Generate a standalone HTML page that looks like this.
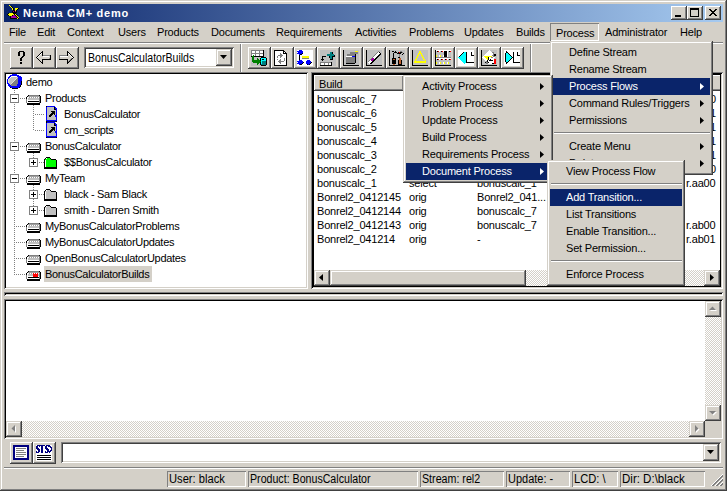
<!DOCTYPE html><html><head><meta charset="utf-8"><style>
*{margin:0;padding:0;box-sizing:border-box}
html,body{width:727px;height:491px;overflow:hidden;background:#D4D0C8}
body{position:relative;font-family:"Liberation Sans",sans-serif;font-size:11px;color:#000}
div,svg{position:absolute}
.t{white-space:nowrap;line-height:13px;font-size:11px;letter-spacing:-0.2px}
.tt{white-space:nowrap;line-height:13px;font-size:11px;letter-spacing:-0.3px}
.btn{background:#D4D0C8;box-shadow:inset -1px -1px #404040,inset 1px 1px #FFFFFF,inset -2px -2px #808080}
.sbtn{background:#D4D0C8;box-shadow:inset -1px -1px #404040,inset 1px 1px #D4D0C8,inset -2px -2px #808080,inset 2px 2px #FFFFFF}
.sunk{box-shadow:inset 1px 1px #808080,inset -1px -1px #FFFFFF,inset 2px 2px #404040,inset -2px -2px #D4D0C8}
.sunkp{box-shadow:inset 1px 1px #808080,inset -1px -1px #FFFFFF,inset 2px 2px #000000,inset -2px -2px #D4D0C8}
.menu{background:#D4D0C8;box-shadow:inset -1px -1px #404040,inset 1px 1px #D4D0C8,inset -2px -2px #808080,inset 2px 2px #FFFFFF}
.chk{background-color:#FFFFFF;background-image:linear-gradient(45deg,#D4D0C8 25%,transparent 25%,transparent 75%,#D4D0C8 75%),linear-gradient(45deg,#D4D0C8 25%,transparent 25%,transparent 75%,#D4D0C8 75%);background-size:2px 2px;background-position:0 0,1px 1px}
.sb{background:#D4D0C8;box-shadow:inset 1px 1px #808080,inset -1px -1px #FFFFFF}
.hl{background:#0A246A}
.ms{white-space:nowrap;line-height:13px;font-size:12px;transform:scaleX(0.88);transform-origin:0 0}
</style></head><body>

<div style="left:0;top:0;width:727px;height:491px;box-shadow:inset -1px -1px #404040,inset 1px 1px #D4D0C8,inset -2px -2px #808080,inset 2px 2px #FFFFFF"></div>
<div style="left:4px;top:4px;width:719px;height:18px;background:linear-gradient(to right,#0A246A,#A6CAF0)"></div>
<svg style="left:6px;top:4px;" width="14" height="16" viewBox="0 0 14 16" shape-rendering="crispEdges"><path d="M3 1h1v1h-1zM4 2h1v1h-1zM5 3h1v1h-1zM6 4h1v1h-1zM9 4h3v1h-3zM6 5h1v1h-1zM9 5h2v1h-2zM9 6h1v1h-1zM3 9h4v1h-4zM2 10h6v1h-6zM9 10h1v1h-1zM3 11h3v1h-3zM10 11h1v1h-1zM11 12h1v1h-1zM12 13h1v1h-1zM11 14h1v1h-1z" fill="#FFFF00"/><path d="M5 2h1v1h-1zM6 3h1v1h-1zM7 4h1v1h-1zM12 4h1v1h-1zM7 5h1v1h-1zM11 5h1v1h-1zM7 6h2v1h-2zM10 6h1v1h-1zM6 7h1v1h-1zM8 7h1v1h-1zM10 7h1v1h-1zM6 8h5v1h-5zM2 9h1v1h-1zM7 9h3v1h-3zM1 10h1v1h-1zM8 10h1v1h-1zM10 10h1v1h-1zM2 11h1v1h-1zM6 11h1v1h-1zM9 11h1v1h-1zM11 11h1v1h-1zM4 12h1v1h-1zM10 12h1v1h-1zM4 13h1v1h-1zM11 13h1v1h-1zM4 14h7v1h-7zM12 14h1v1h-1z" fill="#000000"/><path d="M7 7h1v1h-1zM9 7h1v1h-1zM7 11h2v1h-2zM5 12h5v1h-5zM5 13h6v1h-6z" fill="#A000A0"/></svg>
<div style="left:23px;top:7px;line-height:13px;font-size:11px;font-weight:bold;color:#fff;letter-spacing:0.73px;white-space:nowrap">Neuma CM+ demo</div>
<div class="btn" style="left:671px;top:6px;width:16px;height:14px;"></div>
<div class="btn" style="left:687px;top:6px;width:16px;height:14px;"></div>
<div class="btn" style="left:705px;top:6px;width:16px;height:14px;"></div>
<div style="left:675px;top:15px;width:6px;height:2px;background:#000"></div>
<div style="left:690px;top:8px;width:9px;height:9px;border:1px solid #000;border-top-width:2px"></div>
<svg style="left:709px;top:9px" width="8" height="7" viewBox="0 0 8 7" shape-rendering="crispEdges"><path d="M0 0h2v1h-2zM6 0h2v1h-2zM1 1h2v1h-2zM5 1h2v1h-2zM2 2h4v1h-4zM3 3h2v1h-2zM2 4h4v1h-4zM1 5h2v1h-2zM5 5h2v1h-2zM0 6h2v1h-2zM6 6h2v1h-2z" fill="#000"/></svg>
<div class="t" style="left:9px;top:26px;">File</div>
<div class="t" style="left:37px;top:26px;">Edit</div>
<div class="t" style="left:67px;top:26px;">Context</div>
<div class="t" style="left:118px;top:26px;">Users</div>
<div class="t" style="left:157px;top:26px;">Products</div>
<div class="t" style="left:211px;top:26px;">Documents</div>
<div class="t" style="left:276px;top:26px;">Requirements</div>
<div class="t" style="left:355px;top:26px;">Activities</div>
<div class="t" style="left:409px;top:26px;">Problems</div>
<div class="t" style="left:464px;top:26px;">Updates</div>
<div class="t" style="left:516px;top:26px;">Builds</div>
<div class="t" style="left:605px;top:26px;">Administrator</div>
<div class="t" style="left:680px;top:26px;">Help</div>
<div style="left:550px;top:23px;width:49px;height:18px;box-shadow:inset 1px 1px #808080,inset -1px -1px #FFFFFF"></div>
<div class="t" style="left:556px;top:27px;">Process</div>
<div style="left:4px;top:42px;width:719px;height:1px;background:#808080"></div>
<div style="left:4px;top:43px;width:719px;height:1px;background:#FFFFFF"></div>
<div class="btn" style="left:10px;top:47px;width:23px;height:22px;"></div>
<div class="btn" style="left:33px;top:47px;width:23px;height:22px;"></div>
<div class="btn" style="left:56px;top:47px;width:23px;height:22px;"></div>
<svg style="left:18px;top:51px;" width="7" height="13" viewBox="0 0 7 13" shape-rendering="crispEdges"><path d="M1 0h5v1h-5zM0 1h2v1h-2zM5 1h2v1h-2zM0 2h2v1h-2zM5 2h2v1h-2zM0 3h2v1h-2zM5 3h2v1h-2zM0 4h2v1h-2zM5 4h2v1h-2zM4 5h2v1h-2zM3 6h2v1h-2zM2 7h2v1h-2zM2 8h2v1h-2zM2 9h2v1h-2zM2 11h2v1h-2zM2 12h2v1h-2z" fill="#000000"/></svg>
<svg style="left:36px;top:51px;" width="15" height="13" viewBox="0 0 15 13" shape-rendering="crispEdges"><path d="M6 0h1v1h-1zM5 1h2v1h-2zM4 2h1v1h-1zM6 2h1v1h-1zM3 3h1v1h-1zM6 3h1v1h-1zM2 4h1v1h-1zM6 4h1v1h-1zM14 4h1v1h-1zM1 5h1v1h-1zM14 5h1v1h-1zM0 6h1v1h-1zM14 6h1v1h-1zM1 7h1v1h-1zM14 7h1v1h-1zM2 8h1v1h-1zM6 8h9v1h-9zM3 9h1v1h-1zM6 9h1v1h-1zM4 10h1v1h-1zM6 10h1v1h-1zM5 11h2v1h-2zM6 12h1v1h-1z" fill="#000000"/><path d="M5 2h1v1h-1zM4 3h1v1h-1zM3 4h1v1h-1zM2 5h1v1h-1zM7 5h6v1h-6zM1 6h1v1h-1z" fill="#FFFFFF"/><path d="M5 3h1v1h-1zM4 4h2v1h-2zM3 5h4v1h-4zM13 5h1v1h-1zM2 6h12v1h-12zM2 7h11v1h-11zM3 8h3v1h-3zM4 9h2v1h-2zM5 10h1v1h-1z" fill="#D4D0C8"/><path d="M7 4h7v1h-7zM13 7h1v1h-1z" fill="#808080"/></svg>
<svg style="left:59px;top:51px;" width="15" height="13" viewBox="0 0 15 13" shape-rendering="crispEdges"><path d="M8 0h1v1h-1zM8 1h2v1h-2zM8 2h1v1h-1zM10 2h1v1h-1zM8 3h1v1h-1zM11 3h1v1h-1zM8 4h1v1h-1zM12 4h1v1h-1zM13 5h1v1h-1zM14 6h1v1h-1zM13 7h1v1h-1zM0 8h9v1h-9zM12 8h1v1h-1zM8 9h1v1h-1zM11 9h1v1h-1zM8 10h1v1h-1zM10 10h1v1h-1zM8 11h2v1h-2zM8 12h1v1h-1z" fill="#000000"/><path d="M9 2h1v1h-1zM10 3h1v1h-1zM11 4h1v1h-1zM1 5h8v1h-8zM12 5h1v1h-1zM13 6h1v1h-1z" fill="#FFFFFF"/><path d="M9 3h1v1h-1zM9 4h2v1h-2zM9 5h3v1h-3zM1 6h12v1h-12zM1 7h11v1h-11zM9 8h2v1h-2zM9 9h1v1h-1z" fill="#D4D0C8"/><path d="M0 4h8v1h-8zM0 5h1v1h-1zM0 6h1v1h-1zM0 7h1v1h-1zM12 7h1v1h-1zM11 8h1v1h-1zM10 9h1v1h-1zM9 10h1v1h-1z" fill="#808080"/></svg>
<div class="sunk" style="left:84px;top:47px;width:150px;height:21px;background:#fff"></div>
<div class="ms" style="left:88px;top:52px">BonusCalculatorBuilds</div>
<div class="sbtn" style="left:216px;top:49px;width:16px;height:17px"></div>
<svg style="left:220px;top:55px" width="7" height="4"><path d="M0 0h7l-3.5 4z" fill="#000"/></svg>
<div style="left:240px;top:44px;width:1px;height:28px;background:#808080"></div>
<div style="left:241px;top:44px;width:1px;height:28px;background:#fff"></div>
<div style="left:530px;top:44px;width:1px;height:28px;background:#808080"></div>
<div style="left:531px;top:44px;width:1px;height:28px;background:#fff"></div>
<div class="btn" style="left:248px;top:47px;width:23px;height:22px;"></div>
<svg style="left:251px;top:50px;" width="16" height="16" viewBox="0 0 16 16" shape-rendering="crispEdges"><path d="M0 0h12v1h-12zM0 1h1v1h-1zM4 1h1v1h-1zM8 1h1v1h-1zM0 2h1v1h-1zM4 2h1v1h-1zM8 2h1v1h-1zM0 3h12v1h-12zM0 4h1v1h-1zM4 4h1v1h-1zM8 4h1v1h-1zM0 5h1v1h-1zM4 5h1v1h-1zM8 5h1v1h-1z" fill="#808080"/><path d="M12 0h1v1h-1zM12 1h1v1h-1zM12 2h1v1h-1zM12 3h1v1h-1zM12 4h1v1h-1zM12 5h1v1h-1zM0 6h1v1h-1zM3 6h10v1h-10zM10 7h5v1h-5zM9 8h1v1h-1zM15 8h1v1h-1zM9 9h1v1h-1zM11 9h2v1h-2zM15 9h1v1h-1zM9 10h1v1h-1zM15 10h1v1h-1zM15 11h1v1h-1zM9 12h1v1h-1zM15 12h1v1h-1zM9 13h1v1h-1zM15 13h1v1h-1zM9 14h1v1h-1zM15 14h1v1h-1zM10 15h5v1h-5z" fill="#000000"/><path d="M13 0h3v1h-3zM13 1h3v1h-3zM13 2h3v1h-3zM13 3h3v1h-3zM13 4h3v1h-3zM13 5h3v1h-3zM13 6h3v1h-3zM0 7h1v1h-1zM3 7h7v1h-7zM15 7h1v1h-1zM0 8h1v1h-1zM3 8h3v1h-3zM7 8h2v1h-2zM0 9h1v1h-1zM3 9h3v1h-3zM8 9h1v1h-1zM0 10h1v1h-1zM0 11h1v1h-1zM0 12h2v1h-2zM0 13h6v1h-6zM8 13h1v1h-1zM0 14h6v1h-6zM7 14h2v1h-2zM0 15h10v1h-10zM15 15h1v1h-1z" fill="#C0C0C0"/><path d="M1 1h3v1h-3zM5 1h3v1h-3zM9 1h3v1h-3zM1 2h3v1h-3zM5 2h3v1h-3zM9 2h3v1h-3zM1 4h3v1h-3zM5 4h3v1h-3zM9 4h3v1h-3zM1 5h1v1h-1zM3 5h1v1h-1zM5 5h3v1h-3zM9 5h3v1h-3z" fill="#FFFFFF"/><path d="M2 5h1v1h-1zM1 6h2v1h-2zM1 7h2v1h-2zM1 8h2v1h-2zM6 8h1v1h-1zM1 9h2v1h-2zM6 9h2v1h-2zM1 10h8v1h-8zM1 11h9v1h-9zM2 12h7v1h-7zM6 13h2v1h-2zM6 14h1v1h-1z" fill="#008000"/><path d="M10 8h5v1h-5zM10 9h1v1h-1zM13 9h2v1h-2zM10 10h5v1h-5zM10 11h1v1h-1zM10 12h1v1h-1zM10 13h1v1h-1z" fill="#00FFFF"/><path d="M11 11h4v1h-4zM11 12h4v1h-4zM11 13h4v1h-4zM10 14h5v1h-5z" fill="#008080"/></svg>
<div class="btn" style="left:271px;top:47px;width:23px;height:22px;"></div>
<svg style="left:274px;top:50px;" width="16" height="16" viewBox="0 0 16 16" shape-rendering="crispEdges"><path d="M0 0h10v1h-10zM0 1h1v1h-1zM9 1h2v1h-2zM0 2h1v1h-1zM9 2h1v1h-1zM11 2h1v1h-1zM0 3h1v1h-1zM9 3h4v1h-4zM0 4h1v1h-1zM12 4h1v1h-1zM0 5h1v1h-1zM12 5h1v1h-1zM0 6h1v1h-1zM12 6h1v1h-1zM0 7h1v1h-1zM12 7h1v1h-1zM0 8h1v1h-1zM12 8h1v1h-1zM0 9h1v1h-1zM12 9h1v1h-1zM0 10h1v1h-1zM12 10h1v1h-1zM0 11h1v1h-1zM12 11h1v1h-1zM0 12h1v1h-1zM12 12h1v1h-1zM0 13h1v1h-1zM12 13h1v1h-1zM0 14h1v1h-1zM12 14h1v1h-1zM0 15h13v1h-13z" fill="#000000"/><path d="M1 1h8v1h-8zM1 2h8v1h-8zM10 2h1v1h-1zM1 3h5v1h-5zM7 3h2v1h-2zM1 4h5v1h-5zM8 4h4v1h-4zM1 5h3v1h-3zM9 5h3v1h-3zM1 6h2v1h-2zM4 6h2v1h-2zM8 6h4v1h-4zM1 7h2v1h-2zM4 7h2v1h-2zM7 7h5v1h-5zM1 8h9v1h-9zM11 8h1v1h-1zM1 9h2v1h-2zM4 9h2v1h-2zM7 9h3v1h-3zM11 9h1v1h-1zM1 10h4v1h-4zM7 10h3v1h-3zM11 10h1v1h-1zM1 11h3v1h-3zM10 11h2v1h-2zM1 12h4v1h-4zM7 12h5v1h-5zM1 13h5v1h-5zM7 13h5v1h-5zM1 14h11v1h-11z" fill="#FFFFFF"/><path d="M6 3h1v1h-1zM6 4h2v1h-2zM4 5h5v1h-5zM3 6h1v1h-1zM6 6h2v1h-2zM3 7h1v1h-1zM6 7h1v1h-1zM10 8h1v1h-1zM3 9h1v1h-1zM6 9h1v1h-1zM10 9h1v1h-1zM5 10h2v1h-2zM10 10h1v1h-1zM4 11h6v1h-6zM5 12h2v1h-2zM6 13h1v1h-1z" fill="#808080"/></svg>
<div class="btn" style="left:294px;top:47px;width:23px;height:22px;"></div>
<svg style="left:297px;top:50px;" width="16" height="16" viewBox="0 0 16 16" shape-rendering="crispEdges"><path d="M0 0h2v1h-2zM5 0h11v1h-11zM6 1h10v1h-10zM0 2h1v1h-1zM6 2h10v1h-10zM6 3h10v1h-10zM0 4h2v1h-2zM5 4h11v1h-11zM0 5h2v1h-2zM3 5h13v1h-13zM0 6h2v1h-2zM3 6h2v1h-2zM12 6h4v1h-4zM0 7h2v1h-2zM3 7h2v1h-2zM12 7h4v1h-4zM0 8h2v1h-2zM3 8h2v1h-2zM12 8h4v1h-4zM0 9h2v1h-2zM3 9h13v1h-13zM0 10h2v1h-2zM5 10h5v1h-5zM13 10h3v1h-3zM6 11h3v1h-3zM14 11h2v1h-2zM0 12h1v1h-1zM7 12h2v1h-2zM15 12h1v1h-1zM6 13h3v1h-3zM14 13h2v1h-2zM0 14h2v1h-2zM5 14h5v1h-5zM13 14h3v1h-3zM0 15h16v1h-16z" fill="#FFFFFF"/><path d="M2 0h3v1h-3zM0 1h6v1h-6zM1 2h5v1h-5zM0 3h5v1h-5zM2 4h1v1h-1zM2 10h3v1h-3zM10 10h3v1h-3zM0 11h6v1h-6zM9 11h5v1h-5zM1 12h5v1h-5zM9 12h5v1h-5zM0 13h5v1h-5zM9 13h4v1h-4zM2 14h1v1h-1zM11 14h1v1h-1z" fill="#0000FF"/><path d="M5 3h1v1h-1zM3 4h2v1h-2zM2 5h1v1h-1zM2 6h1v1h-1zM2 7h1v1h-1zM2 8h1v1h-1zM2 9h1v1h-1zM6 12h1v1h-1zM14 12h1v1h-1zM5 13h1v1h-1zM13 13h1v1h-1zM3 14h2v1h-2zM10 14h1v1h-1zM12 14h1v1h-1z" fill="#000000"/><path d="M5 6h7v1h-7zM5 7h7v1h-7z" fill="#FFFF00"/><path d="M5 8h7v1h-7z" fill="#808080"/></svg>
<div class="btn" style="left:317px;top:47px;width:23px;height:22px;"></div>
<svg style="left:320px;top:50px;" width="16" height="16" viewBox="0 0 16 16" shape-rendering="crispEdges"><path d="M0 0h16v1h-16zM0 1h16v1h-16zM0 2h10v1h-10zM13 2h3v1h-3zM0 3h10v1h-10zM13 3h3v1h-3zM0 4h7v1h-7zM14 4h2v1h-2zM0 5h7v1h-7zM15 5h1v1h-1zM0 6h2v1h-2zM6 6h3v1h-3zM15 6h1v1h-1zM0 7h2v1h-2zM3 7h6v1h-6zM13 7h3v1h-3zM0 8h2v1h-2zM3 8h7v1h-7zM13 8h3v1h-3zM0 9h1v1h-1zM4 9h6v1h-6zM13 9h3v1h-3zM0 10h2v1h-2zM3 10h13v1h-13zM0 11h16v1h-16zM12 12h4v1h-4zM12 13h4v1h-4zM12 14h4v1h-4zM12 15h4v1h-4z" fill="#C0C0C0"/><path d="M10 2h2v1h-2zM10 3h2v1h-2zM7 4h7v1h-7zM7 5h7v1h-7zM10 6h2v1h-2zM10 7h2v1h-2zM10 8h2v1h-2z" fill="#008080"/><path d="M12 2h1v1h-1zM12 3h1v1h-1zM14 5h1v1h-1zM2 6h4v1h-4zM9 6h1v1h-1zM12 6h3v1h-3zM2 7h1v1h-1zM9 7h1v1h-1zM12 7h1v1h-1zM2 8h1v1h-1zM12 8h1v1h-1zM1 9h3v1h-3zM10 9h3v1h-3zM2 10h1v1h-1zM11 12h1v1h-1zM11 13h1v1h-1zM11 14h1v1h-1zM0 15h12v1h-12z" fill="#000000"/><path d="M0 12h11v1h-11zM0 13h1v1h-1zM4 13h1v1h-1zM8 13h1v1h-1zM0 14h1v1h-1zM4 14h1v1h-1zM8 14h1v1h-1z" fill="#808080"/><path d="M1 13h3v1h-3zM5 13h3v1h-3zM9 13h2v1h-2zM1 14h3v1h-3zM5 14h3v1h-3zM9 14h2v1h-2z" fill="#FFFFFF"/></svg>
<div class="btn" style="left:340px;top:47px;width:23px;height:22px;"></div>
<svg style="left:343px;top:50px;" width="16" height="16" viewBox="0 0 16 16" shape-rendering="crispEdges"><path d="M0 0h1v1h-1zM0 1h1v1h-1zM0 2h1v1h-1zM0 3h1v1h-1zM0 4h1v1h-1zM12 4h1v1h-1zM0 5h1v1h-1zM12 5h1v1h-1zM0 6h1v1h-1zM12 6h1v1h-1zM0 7h1v1h-1zM12 7h1v1h-1zM0 8h1v1h-1zM12 8h1v1h-1zM0 9h1v1h-1zM12 9h1v1h-1zM0 10h1v1h-1zM12 10h1v1h-1zM0 11h1v1h-1zM12 11h1v1h-1zM0 12h1v1h-1zM12 12h1v1h-1zM0 13h1v1h-1zM3 13h9v1h-9zM0 14h1v1h-1zM0 15h16v1h-16z" fill="#000000"/><path d="M1 0h15v1h-15zM1 1h11v1h-11zM15 1h1v1h-1zM1 2h6v1h-6zM15 2h1v1h-1zM1 3h6v1h-6zM15 3h1v1h-1zM1 4h3v1h-3zM13 4h3v1h-3zM1 5h3v1h-3zM13 5h3v1h-3zM1 6h2v1h-2zM13 6h3v1h-3zM1 7h2v1h-2zM13 7h3v1h-3zM1 8h2v1h-2zM13 8h3v1h-3zM1 9h2v1h-2zM13 9h3v1h-3zM1 10h2v1h-2zM13 10h3v1h-3zM1 11h2v1h-2zM13 11h3v1h-3zM1 12h2v1h-2zM13 12h3v1h-3zM1 13h2v1h-2zM12 13h4v1h-4zM1 14h15v1h-15z" fill="#C0C0C0"/><path d="M12 1h3v1h-3z" fill="#FFFF00"/><path d="M7 2h8v1h-8zM7 3h8v1h-8zM4 4h8v1h-8zM4 5h8v1h-8zM3 7h9v1h-9zM3 8h9v1h-9zM3 9h9v1h-9zM3 10h9v1h-9zM3 11h9v1h-9zM3 12h9v1h-9z" fill="#808080"/><path d="M3 6h6v1h-6z" fill="#FFFFFF"/><path d="M9 6h3v1h-3z" fill="#0000FF"/></svg>
<div class="btn" style="left:363px;top:47px;width:23px;height:22px;"></div>
<svg style="left:366px;top:50px;" width="16" height="16" viewBox="0 0 16 16" shape-rendering="crispEdges"><path d="M0 0h1v1h-1zM0 1h1v1h-1zM0 2h1v1h-1zM13 2h1v1h-1zM0 3h1v1h-1zM14 3h1v1h-1zM0 4h1v1h-1zM13 4h2v1h-2zM0 5h1v1h-1zM12 5h2v1h-2zM0 6h1v1h-1zM11 6h2v1h-2zM0 7h1v1h-1zM10 7h2v1h-2zM0 8h1v1h-1zM9 8h2v1h-2zM0 9h1v1h-1zM8 9h2v1h-2zM0 10h1v1h-1zM7 10h2v1h-2zM0 11h1v1h-1zM6 11h2v1h-2zM0 12h1v1h-1zM5 12h2v1h-2zM0 13h1v1h-1zM4 13h2v1h-2zM0 14h1v1h-1zM0 15h16v1h-16z" fill="#000000"/><path d="M1 0h15v1h-15zM1 1h11v1h-11zM13 1h3v1h-3zM1 2h10v1h-10zM14 2h2v1h-2zM1 3h9v1h-9zM15 3h1v1h-1zM1 4h8v1h-8zM15 4h1v1h-1zM1 5h7v1h-7zM14 5h2v1h-2zM1 6h6v1h-6zM13 6h3v1h-3zM1 7h5v1h-5zM12 7h4v1h-4zM1 8h4v1h-4zM11 8h5v1h-5zM1 9h3v1h-3zM10 9h6v1h-6zM1 10h2v1h-2zM9 10h7v1h-7zM1 11h1v1h-1zM8 11h8v1h-8zM1 12h1v1h-1zM7 12h9v1h-9zM1 13h2v1h-2zM6 13h10v1h-10zM1 14h15v1h-15z" fill="#C0C0C0"/><path d="M12 1h1v1h-1zM11 2h1v1h-1zM10 3h1v1h-1zM9 4h1v1h-1zM8 5h1v1h-1zM7 6h1v1h-1zM6 7h1v1h-1zM5 8h1v1h-1zM4 9h1v1h-1zM3 10h1v1h-1zM2 11h1v1h-1z" fill="#808080"/><path d="M12 2h1v1h-1zM11 3h3v1h-3zM10 4h3v1h-3zM9 5h3v1h-3zM8 6h3v1h-3zM7 7h3v1h-3zM8 8h1v1h-1zM4 10h1v1h-1zM3 11h3v1h-3zM2 12h3v1h-3zM3 13h1v1h-1z" fill="#FFFFFF"/><path d="M6 8h2v1h-2zM5 9h3v1h-3zM5 10h2v1h-2z" fill="#A000A0"/></svg>
<div class="btn" style="left:386px;top:47px;width:23px;height:22px;"></div>
<svg style="left:389px;top:50px;" width="16" height="16" viewBox="0 0 16 16" shape-rendering="crispEdges"><path d="M0 0h1v1h-1zM0 1h1v1h-1zM3 1h2v1h-2zM6 1h1v1h-1zM0 2h1v1h-1zM5 2h3v1h-3zM9 2h1v1h-1zM11 2h2v1h-2zM0 3h1v1h-1zM4 3h1v1h-1zM8 3h4v1h-4zM14 3h1v1h-1zM0 4h1v1h-1zM4 4h1v1h-1zM13 4h1v1h-1zM0 5h1v1h-1zM4 5h1v1h-1zM0 6h1v1h-1zM4 6h1v1h-1zM0 7h1v1h-1zM4 7h1v1h-1zM9 7h2v1h-2zM0 8h1v1h-1zM3 8h4v1h-4zM0 9h1v1h-1zM3 9h1v1h-1zM6 9h1v1h-1zM0 10h1v1h-1zM3 10h4v1h-4zM9 10h1v1h-1zM12 10h1v1h-1zM0 11h1v1h-1zM3 11h4v1h-4zM9 11h1v1h-1zM12 11h1v1h-1zM0 12h1v1h-1zM3 12h4v1h-4zM9 12h1v1h-1zM12 12h1v1h-1zM0 13h1v1h-1zM3 13h4v1h-4zM9 13h1v1h-1zM12 13h1v1h-1zM0 14h1v1h-1zM9 14h4v1h-4zM0 15h16v1h-16z" fill="#000000"/><path d="M1 0h15v1h-15zM1 1h2v1h-2zM5 1h1v1h-1zM7 1h4v1h-4zM13 1h3v1h-3zM1 2h4v1h-4zM8 2h1v1h-1zM14 2h2v1h-2zM1 3h3v1h-3zM5 3h3v1h-3zM12 3h2v1h-2zM15 3h1v1h-1zM1 4h3v1h-3zM5 4h5v1h-5zM11 4h2v1h-2zM14 4h2v1h-2zM1 5h3v1h-3zM5 5h5v1h-5zM11 5h5v1h-5zM1 6h3v1h-3zM5 6h5v1h-5zM11 6h5v1h-5zM1 7h3v1h-3zM5 7h4v1h-4zM11 7h5v1h-5zM1 8h2v1h-2zM7 8h3v1h-3zM12 8h4v1h-4zM1 9h2v1h-2zM7 9h3v1h-3zM12 9h4v1h-4zM1 10h2v1h-2zM7 10h2v1h-2zM13 10h3v1h-3zM1 11h2v1h-2zM7 11h2v1h-2zM13 11h3v1h-3zM1 12h2v1h-2zM7 12h2v1h-2zM13 12h3v1h-3zM1 13h2v1h-2zM7 13h2v1h-2zM13 13h3v1h-3zM1 14h3v1h-3zM6 14h3v1h-3zM13 14h3v1h-3z" fill="#C0C0C0"/><path d="M11 1h2v1h-2zM13 2h1v1h-1zM10 4h1v1h-1zM10 5h1v1h-1zM10 6h1v1h-1z" fill="#808080"/><path d="M10 2h1v1h-1z" fill="#FF0000"/><path d="M10 8h2v1h-2zM4 9h2v1h-2zM10 9h2v1h-2zM10 10h2v1h-2zM10 11h2v1h-2zM10 12h2v1h-2zM10 13h2v1h-2zM4 14h2v1h-2z" fill="#C06030"/></svg>
<div class="btn" style="left:409px;top:47px;width:23px;height:22px;"></div>
<svg style="left:412px;top:50px;" width="16" height="16" viewBox="0 0 16 16" shape-rendering="crispEdges"><path d="M0 0h1v1h-1zM0 1h1v1h-1zM0 2h1v1h-1zM0 3h1v1h-1zM0 4h1v1h-1zM0 5h1v1h-1zM0 6h1v1h-1zM0 7h1v1h-1zM0 8h1v1h-1zM0 9h1v1h-1zM0 10h1v1h-1zM0 11h1v1h-1zM0 12h1v1h-1zM0 13h1v1h-1zM0 14h1v1h-1zM0 15h16v1h-16z" fill="#000000"/><path d="M1 0h15v1h-15zM1 1h6v1h-6zM9 1h7v1h-7zM1 2h6v1h-6zM9 2h7v1h-7zM1 3h5v1h-5zM10 3h6v1h-6zM1 4h5v1h-5zM7 4h2v1h-2zM10 4h6v1h-6zM1 5h4v1h-4zM7 5h2v1h-2zM11 5h5v1h-5zM1 6h4v1h-4zM6 6h4v1h-4zM11 6h5v1h-5zM1 7h3v1h-3zM6 7h4v1h-4zM12 7h4v1h-4zM1 8h3v1h-3zM5 8h6v1h-6zM12 8h4v1h-4zM1 9h2v1h-2zM5 9h6v1h-6zM13 9h3v1h-3zM1 10h2v1h-2zM4 10h9v1h-9zM14 10h2v1h-2zM1 11h1v1h-1zM14 11h2v1h-2zM1 12h1v1h-1zM14 12h2v1h-2zM1 13h15v1h-15zM1 14h15v1h-15z" fill="#C0C0C0"/><path d="M7 1h2v1h-2zM7 2h2v1h-2zM6 3h4v1h-4zM6 4h1v1h-1zM9 4h1v1h-1zM5 5h2v1h-2zM9 5h2v1h-2zM5 6h1v1h-1zM10 6h1v1h-1zM4 7h2v1h-2zM10 7h2v1h-2zM4 8h1v1h-1zM11 8h1v1h-1zM3 9h2v1h-2zM11 9h2v1h-2zM3 10h1v1h-1zM13 10h1v1h-1zM2 11h12v1h-12zM2 12h12v1h-12z" fill="#FFFF00"/></svg>
<div class="btn" style="left:432px;top:47px;width:23px;height:22px;"></div>
<svg style="left:435px;top:50px;" width="16" height="16" viewBox="0 0 16 16" shape-rendering="crispEdges"><path d="M0 0h1v1h-1zM0 1h1v1h-1zM2 1h1v1h-1zM6 1h1v1h-1zM9 1h3v1h-3zM14 1h1v1h-1zM0 2h1v1h-1zM9 2h3v1h-3zM0 3h1v1h-1zM9 3h3v1h-3zM0 4h1v1h-1zM9 4h3v1h-3zM0 5h1v1h-1zM9 5h3v1h-3zM0 6h1v1h-1zM9 6h3v1h-3zM0 7h1v1h-1zM0 8h1v1h-1zM0 9h1v1h-1zM2 9h1v1h-1zM6 9h1v1h-1zM10 9h1v1h-1zM14 9h1v1h-1zM0 10h1v1h-1zM0 11h1v1h-1zM0 12h1v1h-1zM0 13h1v1h-1zM0 14h1v1h-1zM0 15h16v1h-16z" fill="#000000"/><path d="M1 0h15v1h-15zM4 1h1v1h-1zM8 1h1v1h-1zM12 1h1v1h-1zM12 2h1v1h-1zM12 3h1v1h-1zM12 4h1v1h-1zM4 5h1v1h-1zM8 5h1v1h-1zM12 5h1v1h-1zM4 6h1v1h-1zM8 6h1v1h-1zM12 6h1v1h-1zM1 8h15v1h-15zM4 9h1v1h-1zM8 9h1v1h-1zM12 9h1v1h-1zM4 12h1v1h-1zM8 12h1v1h-1zM12 12h1v1h-1zM4 13h1v1h-1zM8 13h1v1h-1zM12 13h1v1h-1z" fill="#FFFFFF"/><path d="M1 1h1v1h-1zM5 1h1v1h-1zM13 1h1v1h-1zM1 2h8v1h-8zM13 2h3v1h-3zM1 3h8v1h-8zM13 3h3v1h-3zM1 4h8v1h-8zM13 4h3v1h-3zM2 5h2v1h-2zM6 5h2v1h-2zM13 5h3v1h-3zM2 6h2v1h-2zM6 6h2v1h-2zM13 6h3v1h-3zM1 9h1v1h-1zM5 9h1v1h-1zM9 9h1v1h-1zM13 9h1v1h-1zM1 10h15v1h-15zM1 11h15v1h-15zM2 12h2v1h-2zM6 12h2v1h-2zM10 12h2v1h-2zM14 12h2v1h-2zM2 13h2v1h-2zM6 13h2v1h-2zM10 13h2v1h-2zM14 13h2v1h-2zM1 14h15v1h-15z" fill="#C0C0C0"/><path d="M3 1h1v1h-1zM7 1h1v1h-1zM15 1h1v1h-1zM3 9h1v1h-1zM7 9h1v1h-1zM11 9h1v1h-1zM15 9h1v1h-1z" fill="#FF0000"/><path d="M1 5h1v1h-1zM5 5h1v1h-1zM1 6h1v1h-1zM5 6h1v1h-1zM1 12h1v1h-1zM5 12h1v1h-1zM9 12h1v1h-1zM13 12h1v1h-1zM1 13h1v1h-1zM5 13h1v1h-1zM9 13h1v1h-1zM13 13h1v1h-1z" fill="#FFFF00"/><path d="M1 7h15v1h-15z" fill="#808080"/></svg>
<div class="btn" style="left:455px;top:47px;width:23px;height:22px;"></div>
<svg style="left:458px;top:50px;" width="16" height="16" viewBox="0 0 16 16" shape-rendering="crispEdges"><path d="M0 0h16v1h-16zM0 1h16v1h-16zM0 2h5v1h-5zM9 2h4v1h-4zM14 2h2v1h-2zM0 3h4v1h-4zM9 3h4v1h-4zM14 3h2v1h-2zM0 4h3v1h-3zM9 4h4v1h-4zM14 4h2v1h-2zM0 5h2v1h-2zM9 5h4v1h-4zM0 6h1v1h-1zM9 6h7v1h-7zM9 7h7v1h-7zM0 8h1v1h-1zM9 8h7v1h-7zM0 9h2v1h-2zM9 9h7v1h-7zM0 10h3v1h-3zM9 10h7v1h-7zM0 11h4v1h-4zM9 11h7v1h-7zM0 12h5v1h-5zM0 13h6v1h-6zM7 13h9v1h-9zM0 14h16v1h-16zM0 15h16v1h-16z" fill="#FFFFFF"/><path d="M5 2h1v1h-1zM8 2h1v1h-1zM13 2h1v1h-1zM4 3h1v1h-1zM8 3h1v1h-1zM13 3h1v1h-1zM3 4h1v1h-1zM8 4h1v1h-1zM13 4h1v1h-1zM2 5h1v1h-1zM8 5h1v1h-1zM13 5h3v1h-3zM1 6h1v1h-1zM8 6h1v1h-1zM8 7h1v1h-1zM8 8h1v1h-1zM8 9h1v1h-1zM8 10h1v1h-1zM8 11h1v1h-1zM8 12h8v1h-8z" fill="#000000"/><path d="M6 2h2v1h-2zM5 3h3v1h-3zM4 4h4v1h-4zM3 5h5v1h-5zM2 6h6v1h-6zM0 7h8v1h-8zM1 8h7v1h-7zM2 9h6v1h-6zM3 10h5v1h-5zM4 11h4v1h-4zM5 12h3v1h-3zM6 13h1v1h-1z" fill="#00FFFF"/></svg>
<div class="btn" style="left:478px;top:47px;width:23px;height:22px;"></div>
<svg style="left:481px;top:50px;" width="16" height="16" viewBox="0 0 16 16" shape-rendering="crispEdges"><path d="M0 0h1v1h-1zM0 1h1v1h-1zM0 2h1v1h-1zM0 3h1v1h-1zM0 4h1v1h-1zM13 4h2v1h-2zM0 5h1v1h-1zM13 5h2v1h-2zM0 6h1v1h-1zM0 7h1v1h-1zM7 7h1v1h-1zM0 8h1v1h-1zM7 8h1v1h-1zM0 9h1v1h-1zM7 9h1v1h-1zM9 9h1v1h-1zM0 10h1v1h-1zM6 10h1v1h-1zM8 10h4v1h-4zM0 11h1v1h-1zM6 11h1v1h-1zM0 12h1v1h-1zM4 12h1v1h-1zM7 12h1v1h-1zM0 13h1v1h-1zM11 13h2v1h-2zM0 14h1v1h-1zM0 15h16v1h-16z" fill="#000000"/><path d="M1 0h7v1h-7zM9 0h7v1h-7zM1 1h6v1h-6zM10 1h6v1h-6zM1 2h5v1h-5zM13 2h3v1h-3zM1 3h4v1h-4zM13 3h3v1h-3zM1 4h3v1h-3zM15 4h1v1h-1zM1 5h2v1h-2zM15 5h1v1h-1zM1 6h1v1h-1zM14 6h2v1h-2zM14 7h2v1h-2zM1 8h1v1h-1zM13 8h3v1h-3zM1 9h2v1h-2zM15 9h1v1h-1zM1 10h3v1h-3zM15 10h1v1h-1zM1 11h4v1h-4zM15 11h1v1h-1zM1 12h3v1h-3zM15 12h1v1h-1zM1 13h4v1h-4zM15 13h1v1h-1zM1 14h15v1h-15z" fill="#C0C0C0"/><path d="M8 0h1v1h-1zM7 1h3v1h-3zM6 2h5v1h-5zM5 3h7v1h-7zM4 4h8v1h-8zM3 5h8v1h-8zM2 6h1v1h-1zM11 6h1v1h-1zM1 7h3v1h-3zM8 7h2v1h-2zM12 7h2v1h-2zM2 8h3v1h-3zM8 8h5v1h-5zM3 9h3v1h-3zM8 9h1v1h-1zM10 9h3v1h-3zM4 10h2v1h-2zM7 10h1v1h-1zM12 10h1v1h-1zM7 11h6v1h-6zM8 12h5v1h-5zM7 13h4v1h-4z" fill="#FFFFFF"/><path d="M11 2h2v1h-2zM12 3h1v1h-1zM12 4h1v1h-1zM11 5h2v1h-2zM12 6h2v1h-2zM10 7h2v1h-2zM5 11h1v1h-1zM5 12h2v1h-2zM5 13h2v1h-2z" fill="#808080"/><path d="M3 6h8v1h-8zM4 7h3v1h-3zM5 8h2v1h-2zM6 9h1v1h-1z" fill="#FFFF00"/><path d="M13 9h2v1h-2zM13 10h2v1h-2zM13 11h2v1h-2zM13 12h2v1h-2zM13 13h2v1h-2z" fill="#FF0000"/></svg>
<div class="btn" style="left:501px;top:47px;width:23px;height:22px;"></div>
<svg style="left:504px;top:50px;" width="16" height="16" viewBox="0 0 16 16" shape-rendering="crispEdges"><path d="M0 0h16v1h-16zM0 1h2v1h-2zM3 1h13v1h-13zM0 2h2v1h-2zM4 2h5v1h-5zM10 2h3v1h-3zM14 2h2v1h-2zM0 3h1v1h-1zM5 3h4v1h-4zM10 3h3v1h-3zM14 3h2v1h-2zM0 4h1v1h-1zM6 4h3v1h-3zM10 4h3v1h-3zM14 4h2v1h-2zM0 5h1v1h-1zM7 5h2v1h-2zM10 5h3v1h-3zM0 6h1v1h-1zM8 6h1v1h-1zM10 6h6v1h-6zM0 7h1v1h-1zM10 7h6v1h-6zM0 8h1v1h-1zM8 8h1v1h-1zM10 8h6v1h-6zM0 9h1v1h-1zM7 9h2v1h-2zM10 9h6v1h-6zM0 10h1v1h-1zM6 10h3v1h-3zM10 10h6v1h-6zM0 11h1v1h-1zM5 11h4v1h-4zM10 11h6v1h-6zM0 12h2v1h-2zM4 12h5v1h-5zM0 13h2v1h-2zM3 13h13v1h-13zM0 14h16v1h-16zM0 15h16v1h-16z" fill="#FFFFFF"/><path d="M2 1h1v1h-1zM2 2h2v1h-2zM9 2h1v1h-1zM13 2h1v1h-1zM1 3h1v1h-1zM4 3h1v1h-1zM9 3h1v1h-1zM13 3h1v1h-1zM1 4h1v1h-1zM5 4h1v1h-1zM9 4h1v1h-1zM13 4h1v1h-1zM1 5h1v1h-1zM6 5h1v1h-1zM9 5h1v1h-1zM13 5h3v1h-3zM1 6h1v1h-1zM7 6h1v1h-1zM9 6h1v1h-1zM1 7h1v1h-1zM8 7h2v1h-2zM1 8h1v1h-1zM7 8h1v1h-1zM9 8h1v1h-1zM1 9h1v1h-1zM6 9h1v1h-1zM9 9h1v1h-1zM1 10h1v1h-1zM5 10h1v1h-1zM9 10h1v1h-1zM1 11h1v1h-1zM4 11h1v1h-1zM9 11h1v1h-1zM2 12h2v1h-2zM9 12h7v1h-7zM2 13h1v1h-1z" fill="#000000"/><path d="M2 3h2v1h-2zM2 4h3v1h-3zM2 5h4v1h-4zM2 6h5v1h-5zM2 7h6v1h-6zM2 8h5v1h-5zM2 9h4v1h-4zM2 10h3v1h-3zM2 11h2v1h-2z" fill="#00FFFF"/></svg>
<div class="sunkp" style="left:4px;top:72px;width:304px;height:217px;background:#fff"></div>
<div style="left:14px;top:90px;width:1px;height:185px;background:repeating-linear-gradient(to bottom,#808080 0 1px,transparent 1px 2px)"></div>
<div style="left:33px;top:105px;width:1px;height:26px;background:repeating-linear-gradient(to bottom,#808080 0 1px,transparent 1px 2px)"></div>
<div style="left:35px;top:114px;width:10px;height:1px;background:repeating-linear-gradient(to right,#808080 0 1px,transparent 1px 2px)"></div>
<div style="left:35px;top:130px;width:10px;height:1px;background:repeating-linear-gradient(to right,#808080 0 1px,transparent 1px 2px)"></div>
<div style="left:33px;top:153px;width:1px;height:5px;background:repeating-linear-gradient(to bottom,#808080 0 1px,transparent 1px 2px)"></div>
<div style="left:33px;top:185px;width:1px;height:21px;background:repeating-linear-gradient(to bottom,#808080 0 1px,transparent 1px 2px)"></div>
<div style="left:20px;top:98px;width:5px;height:1px;background:repeating-linear-gradient(to right,#808080 0 1px,transparent 1px 2px)"></div>
<div style="left:20px;top:146px;width:5px;height:1px;background:repeating-linear-gradient(to right,#808080 0 1px,transparent 1px 2px)"></div>
<div style="left:39px;top:162px;width:5px;height:1px;background:repeating-linear-gradient(to right,#808080 0 1px,transparent 1px 2px)"></div>
<div style="left:20px;top:178px;width:5px;height:1px;background:repeating-linear-gradient(to right,#808080 0 1px,transparent 1px 2px)"></div>
<div style="left:39px;top:194px;width:5px;height:1px;background:repeating-linear-gradient(to right,#808080 0 1px,transparent 1px 2px)"></div>
<div style="left:39px;top:210px;width:5px;height:1px;background:repeating-linear-gradient(to right,#808080 0 1px,transparent 1px 2px)"></div>
<div style="left:16px;top:226px;width:9px;height:1px;background:repeating-linear-gradient(to right,#808080 0 1px,transparent 1px 2px)"></div>
<div style="left:16px;top:242px;width:9px;height:1px;background:repeating-linear-gradient(to right,#808080 0 1px,transparent 1px 2px)"></div>
<div style="left:16px;top:258px;width:9px;height:1px;background:repeating-linear-gradient(to right,#808080 0 1px,transparent 1px 2px)"></div>
<div style="left:16px;top:274px;width:9px;height:1px;background:repeating-linear-gradient(to right,#808080 0 1px,transparent 1px 2px)"></div>
<div style="left:44px;top:266px;width:108px;height:16px;background:#D4D0C8"></div>
<svg style="left:7px;top:74px;" width="15" height="15" viewBox="0 0 15 15" shape-rendering="crispEdges"><path d="M5 0h5v1h-5zM3 1h9v1h-9zM2 2h2v1h-2zM10 2h4v1h-4zM1 3h2v1h-2zM11 3h4v1h-4zM1 4h1v1h-1zM11 4h4v1h-4zM0 5h1v1h-1zM11 5h4v1h-4zM0 6h1v1h-1zM11 6h4v1h-4zM0 7h1v1h-1zM11 7h3v1h-3zM0 8h1v1h-1zM11 8h3v1h-3zM0 9h2v1h-2zM11 9h3v1h-3zM1 10h2v1h-2zM10 10h4v1h-4zM1 11h3v1h-3zM10 11h3v1h-3zM2 12h11v1h-11zM4 13h8v1h-8z" fill="#0000FF"/><path d="M4 2h6v1h-6zM3 3h1v1h-1z" fill="#FFFFFF"/><path d="M4 3h7v1h-7zM3 4h6v1h-6zM2 5h6v1h-6zM2 6h5v1h-5zM2 7h4v1h-4zM2 8h3v1h-3zM2 9h2v1h-2zM3 10h1v1h-1z" fill="#C0C0C0"/><path d="M2 4h1v1h-1zM9 4h1v1h-1zM1 5h1v1h-1zM8 5h1v1h-1zM1 6h1v1h-1zM7 6h1v1h-1zM1 7h1v1h-1zM6 7h1v1h-1zM1 8h1v1h-1zM5 8h1v1h-1zM4 9h1v1h-1z" fill="#E0E0D0"/><path d="M10 4h1v1h-1zM9 5h2v1h-2zM8 6h3v1h-3zM7 7h4v1h-4zM6 8h5v1h-5zM5 9h6v1h-6zM4 10h6v1h-6zM4 11h6v1h-6z" fill="#808080"/><path d="M14 7h1v1h-1zM14 8h1v1h-1zM14 9h1v1h-1zM14 10h1v1h-1zM13 11h1v1h-1zM13 12h1v1h-1zM3 13h1v1h-1zM12 13h1v1h-1zM5 14h6v1h-6z" fill="#000000"/></svg>
<div class="tt" style="left:26px;top:76px;">demo</div>
<div style="left:10px;top:94px;width:9px;height:9px;border:1px solid #808080;background:#fff"></div>
<div style="left:12px;top:98px;width:5px;height:1px;background:#000"></div>
<svg style="left:26px;top:95px" width="15" height="10" viewBox="0 0 15 10" shape-rendering="crispEdges">
<rect x="3" y="0" width="10" height="1" fill="#808080"/><rect x="2" y="0" width="1" height="1" fill="#000"/><rect x="13" y="0" width="1" height="1" fill="#000"/>
<rect x="1" y="1" width="1" height="1" fill="#000"/><rect x="2" y="1" width="11" height="1" fill="#A0A0A0"/><rect x="14" y="1" width="1" height="7" fill="#000"/><rect x="13" y="1" width="1" height="7" fill="#808080"/>
<rect x="0" y="2" width="1" height="2" fill="#000"/><rect x="0" y="4" width="1" height="4" fill="#808080"/>
<rect x="1" y="2" width="12" height="6" fill="#fff"/>
<rect x="3" y="2" width="1" height="1" fill="#A0A0A0"/><rect x="5" y="2" width="1" height="1" fill="#A0A0A0"/><rect x="7" y="2" width="1" height="1" fill="#A0A0A0"/><rect x="9" y="2" width="1" height="1" fill="#A0A0A0"/><rect x="11" y="2" width="1" height="1" fill="#A0A0A0"/>
<rect x="2" y="3" width="11" height="2" fill="#C0C0C0"/>

<rect x="2" y="6" width="11" height="1" fill="#000"/>
<rect x="1" y="8" width="13" height="2" fill="#000"/>
</svg>
<div class="tt" style="left:45px;top:92px;">Products</div>
<svg style="left:46px;top:106px;" width="11" height="16" viewBox="0 0 11 16" shape-rendering="crispEdges"><path d="M0 0h1v1h-1zM8 1h1v1h-1zM8 2h1v1h-1zM8 3h2v1h-2zM5 5h4v1h-4zM6 6h3v1h-3zM5 7h4v1h-4zM4 8h3v1h-3zM8 8h1v1h-1zM3 9h3v1h-3zM3 10h2v1h-2zM0 15h1v1h-1zM10 15h1v1h-1z" fill="#000000"/><path d="M1 0h8v1h-8zM0 1h1v1h-1zM9 1h1v1h-1zM0 2h1v1h-1zM9 2h2v1h-2zM0 3h1v1h-1zM10 3h1v1h-1zM0 4h1v1h-1zM10 4h1v1h-1zM0 5h1v1h-1zM10 5h1v1h-1zM0 6h1v1h-1zM10 6h1v1h-1zM0 7h1v1h-1zM10 7h1v1h-1zM0 8h1v1h-1zM10 8h1v1h-1zM0 9h1v1h-1zM9 9h2v1h-2zM0 10h1v1h-1zM9 10h2v1h-2zM0 11h1v1h-1zM10 11h1v1h-1zM0 12h1v1h-1zM10 12h1v1h-1zM0 13h1v1h-1zM10 13h1v1h-1zM0 14h11v1h-11z" fill="#0000FF"/><path d="M1 1h7v1h-7zM1 2h7v1h-7zM1 3h7v1h-7zM1 4h9v1h-9zM1 5h4v1h-4zM9 5h1v1h-1zM1 6h5v1h-5zM9 6h1v1h-1zM1 7h4v1h-4zM9 7h1v1h-1zM1 8h3v1h-3zM7 8h1v1h-1zM9 8h1v1h-1zM1 9h2v1h-2zM6 9h3v1h-3zM1 10h2v1h-2zM5 10h4v1h-4zM1 11h9v1h-9zM1 12h9v1h-9zM1 13h9v1h-9z" fill="#C0C0C0"/><path d="M1 15h9v1h-9z" fill="#000080"/></svg>
<div class="tt" style="left:64px;top:108px;">BonusCalculator</div>
<svg style="left:46px;top:122px;" width="11" height="16" viewBox="0 0 11 16" shape-rendering="crispEdges"><path d="M0 0h1v1h-1zM8 1h1v1h-1zM8 2h1v1h-1zM8 3h2v1h-2zM5 5h4v1h-4zM6 6h3v1h-3zM5 7h4v1h-4zM4 8h3v1h-3zM8 8h1v1h-1zM3 9h3v1h-3zM3 10h2v1h-2zM0 15h1v1h-1zM10 15h1v1h-1z" fill="#000000"/><path d="M1 0h8v1h-8zM0 1h1v1h-1zM9 1h1v1h-1zM0 2h1v1h-1zM9 2h2v1h-2zM0 3h1v1h-1zM10 3h1v1h-1zM0 4h1v1h-1zM10 4h1v1h-1zM0 5h1v1h-1zM10 5h1v1h-1zM0 6h1v1h-1zM10 6h1v1h-1zM0 7h1v1h-1zM10 7h1v1h-1zM0 8h1v1h-1zM10 8h1v1h-1zM0 9h1v1h-1zM9 9h2v1h-2zM0 10h1v1h-1zM9 10h2v1h-2zM0 11h1v1h-1zM10 11h1v1h-1zM0 12h1v1h-1zM10 12h1v1h-1zM0 13h1v1h-1zM10 13h1v1h-1zM0 14h11v1h-11z" fill="#0000FF"/><path d="M1 1h7v1h-7zM1 2h7v1h-7zM1 3h7v1h-7zM1 4h9v1h-9zM1 5h4v1h-4zM9 5h1v1h-1zM1 6h5v1h-5zM9 6h1v1h-1zM1 7h4v1h-4zM9 7h1v1h-1zM1 8h3v1h-3zM7 8h1v1h-1zM9 8h1v1h-1zM1 9h2v1h-2zM6 9h3v1h-3zM1 10h2v1h-2zM5 10h4v1h-4zM1 11h9v1h-9zM1 12h9v1h-9zM1 13h9v1h-9z" fill="#C0C0C0"/><path d="M1 15h9v1h-9z" fill="#000080"/></svg>
<div class="tt" style="left:64px;top:124px;">cm_scripts</div>
<div style="left:10px;top:142px;width:9px;height:9px;border:1px solid #808080;background:#fff"></div>
<div style="left:12px;top:146px;width:5px;height:1px;background:#000"></div>
<svg style="left:26px;top:143px" width="15" height="10" viewBox="0 0 15 10" shape-rendering="crispEdges">
<rect x="3" y="0" width="10" height="1" fill="#808080"/><rect x="2" y="0" width="1" height="1" fill="#000"/><rect x="13" y="0" width="1" height="1" fill="#000"/>
<rect x="1" y="1" width="1" height="1" fill="#000"/><rect x="2" y="1" width="11" height="1" fill="#A0A0A0"/><rect x="14" y="1" width="1" height="7" fill="#000"/><rect x="13" y="1" width="1" height="7" fill="#808080"/>
<rect x="0" y="2" width="1" height="2" fill="#000"/><rect x="0" y="4" width="1" height="4" fill="#808080"/>
<rect x="1" y="2" width="12" height="6" fill="#fff"/>
<rect x="3" y="2" width="1" height="1" fill="#A0A0A0"/><rect x="5" y="2" width="1" height="1" fill="#A0A0A0"/><rect x="7" y="2" width="1" height="1" fill="#A0A0A0"/><rect x="9" y="2" width="1" height="1" fill="#A0A0A0"/><rect x="11" y="2" width="1" height="1" fill="#A0A0A0"/>
<rect x="2" y="3" width="11" height="2" fill="#C0C0C0"/>

<rect x="2" y="6" width="11" height="1" fill="#000"/>
<rect x="1" y="8" width="13" height="2" fill="#000"/>
</svg>
<div class="tt" style="left:45px;top:140px;">BonusCalculator</div>
<div style="left:29px;top:158px;width:9px;height:9px;border:1px solid #808080;background:#fff"></div>
<div style="left:31px;top:162px;width:5px;height:1px;background:#000"></div>
<div style="left:33px;top:160px;width:1px;height:5px;background:#000"></div>
<svg style="left:44px;top:157px" width="13" height="12" viewBox="0 0 13 12" shape-rendering="crispEdges">
<path d="M2 0h4v1h1v1h5v1h1v9h-13v-10h1v-1z" fill="#000"/>
<path d="M2 1h4v1h1v1h5v7h-11v-8h1z" fill="#00FF00"/>
<rect x="1" y="3" width="1" height="7" fill="#fff"/><rect x="2" y="1" width="1" height="1" fill="#fff"/><rect x="2" y="3" width="10" height="1" fill="#fff" opacity="0.0"/>
<rect x="1" y="10" width="12" height="1" fill="#000"/><rect x="12" y="3" width="1" height="8" fill="#000"/>
</svg>
<div class="tt" style="left:64px;top:156px;">$$BonusCalculator</div>
<div style="left:10px;top:174px;width:9px;height:9px;border:1px solid #808080;background:#fff"></div>
<div style="left:12px;top:178px;width:5px;height:1px;background:#000"></div>
<svg style="left:26px;top:175px" width="15" height="10" viewBox="0 0 15 10" shape-rendering="crispEdges">
<rect x="3" y="0" width="10" height="1" fill="#808080"/><rect x="2" y="0" width="1" height="1" fill="#000"/><rect x="13" y="0" width="1" height="1" fill="#000"/>
<rect x="1" y="1" width="1" height="1" fill="#000"/><rect x="2" y="1" width="11" height="1" fill="#A0A0A0"/><rect x="14" y="1" width="1" height="7" fill="#000"/><rect x="13" y="1" width="1" height="7" fill="#808080"/>
<rect x="0" y="2" width="1" height="2" fill="#000"/><rect x="0" y="4" width="1" height="4" fill="#808080"/>
<rect x="1" y="2" width="12" height="6" fill="#fff"/>
<rect x="3" y="2" width="1" height="1" fill="#A0A0A0"/><rect x="5" y="2" width="1" height="1" fill="#A0A0A0"/><rect x="7" y="2" width="1" height="1" fill="#A0A0A0"/><rect x="9" y="2" width="1" height="1" fill="#A0A0A0"/><rect x="11" y="2" width="1" height="1" fill="#A0A0A0"/>
<rect x="2" y="3" width="11" height="2" fill="#C0C0C0"/>

<rect x="2" y="6" width="11" height="1" fill="#000"/>
<rect x="1" y="8" width="13" height="2" fill="#000"/>
</svg>
<div class="tt" style="left:45px;top:172px;">MyTeam</div>
<div style="left:29px;top:190px;width:9px;height:9px;border:1px solid #808080;background:#fff"></div>
<div style="left:31px;top:194px;width:5px;height:1px;background:#000"></div>
<div style="left:33px;top:192px;width:1px;height:5px;background:#000"></div>
<svg style="left:44px;top:189px" width="13" height="12" viewBox="0 0 13 12" shape-rendering="crispEdges">
<path d="M2 0h4v1h1v1h5v1h1v9h-13v-10h1v-1z" fill="#000"/>
<path d="M2 1h4v1h1v1h5v7h-11v-8h1z" fill="#C0C0C0"/>
<rect x="1" y="3" width="1" height="7" fill="#fff"/><rect x="2" y="1" width="1" height="1" fill="#fff"/><rect x="2" y="3" width="10" height="1" fill="#fff" opacity="0.0"/>
<rect x="1" y="10" width="12" height="1" fill="#000"/><rect x="12" y="3" width="1" height="8" fill="#000"/>
</svg>
<div class="tt" style="left:64px;top:188px;">black - Sam Black</div>
<div style="left:29px;top:206px;width:9px;height:9px;border:1px solid #808080;background:#fff"></div>
<div style="left:31px;top:210px;width:5px;height:1px;background:#000"></div>
<div style="left:33px;top:208px;width:1px;height:5px;background:#000"></div>
<svg style="left:44px;top:205px" width="13" height="12" viewBox="0 0 13 12" shape-rendering="crispEdges">
<path d="M2 0h4v1h1v1h5v1h1v9h-13v-10h1v-1z" fill="#000"/>
<path d="M2 1h4v1h1v1h5v7h-11v-8h1z" fill="#C0C0C0"/>
<rect x="1" y="3" width="1" height="7" fill="#fff"/><rect x="2" y="1" width="1" height="1" fill="#fff"/><rect x="2" y="3" width="10" height="1" fill="#fff" opacity="0.0"/>
<rect x="1" y="10" width="12" height="1" fill="#000"/><rect x="12" y="3" width="1" height="8" fill="#000"/>
</svg>
<div class="tt" style="left:64px;top:204px;">smith - Darren Smith</div>
<svg style="left:26px;top:223px" width="15" height="10" viewBox="0 0 15 10" shape-rendering="crispEdges">
<rect x="3" y="0" width="10" height="1" fill="#808080"/><rect x="2" y="0" width="1" height="1" fill="#000"/><rect x="13" y="0" width="1" height="1" fill="#000"/>
<rect x="1" y="1" width="1" height="1" fill="#000"/><rect x="2" y="1" width="11" height="1" fill="#A0A0A0"/><rect x="14" y="1" width="1" height="7" fill="#000"/><rect x="13" y="1" width="1" height="7" fill="#808080"/>
<rect x="0" y="2" width="1" height="2" fill="#000"/><rect x="0" y="4" width="1" height="4" fill="#808080"/>
<rect x="1" y="2" width="12" height="6" fill="#fff"/>
<rect x="3" y="2" width="1" height="1" fill="#A0A0A0"/><rect x="5" y="2" width="1" height="1" fill="#A0A0A0"/><rect x="7" y="2" width="1" height="1" fill="#A0A0A0"/><rect x="9" y="2" width="1" height="1" fill="#A0A0A0"/><rect x="11" y="2" width="1" height="1" fill="#A0A0A0"/>
<rect x="2" y="3" width="11" height="2" fill="#C0C0C0"/>

<rect x="2" y="6" width="11" height="1" fill="#000"/>
<rect x="1" y="8" width="13" height="2" fill="#000"/>
</svg>
<div class="tt" style="left:45px;top:220px;">MyBonusCalculatorProblems</div>
<svg style="left:26px;top:239px" width="15" height="10" viewBox="0 0 15 10" shape-rendering="crispEdges">
<rect x="3" y="0" width="10" height="1" fill="#808080"/><rect x="2" y="0" width="1" height="1" fill="#000"/><rect x="13" y="0" width="1" height="1" fill="#000"/>
<rect x="1" y="1" width="1" height="1" fill="#000"/><rect x="2" y="1" width="11" height="1" fill="#A0A0A0"/><rect x="14" y="1" width="1" height="7" fill="#000"/><rect x="13" y="1" width="1" height="7" fill="#808080"/>
<rect x="0" y="2" width="1" height="2" fill="#000"/><rect x="0" y="4" width="1" height="4" fill="#808080"/>
<rect x="1" y="2" width="12" height="6" fill="#fff"/>
<rect x="3" y="2" width="1" height="1" fill="#A0A0A0"/><rect x="5" y="2" width="1" height="1" fill="#A0A0A0"/><rect x="7" y="2" width="1" height="1" fill="#A0A0A0"/><rect x="9" y="2" width="1" height="1" fill="#A0A0A0"/><rect x="11" y="2" width="1" height="1" fill="#A0A0A0"/>
<rect x="2" y="3" width="11" height="2" fill="#C0C0C0"/>

<rect x="2" y="6" width="11" height="1" fill="#000"/>
<rect x="1" y="8" width="13" height="2" fill="#000"/>
</svg>
<div class="tt" style="left:45px;top:236px;">MyBonusCalculatorUpdates</div>
<svg style="left:26px;top:255px" width="15" height="10" viewBox="0 0 15 10" shape-rendering="crispEdges">
<rect x="3" y="0" width="10" height="1" fill="#808080"/><rect x="2" y="0" width="1" height="1" fill="#000"/><rect x="13" y="0" width="1" height="1" fill="#000"/>
<rect x="1" y="1" width="1" height="1" fill="#000"/><rect x="2" y="1" width="11" height="1" fill="#A0A0A0"/><rect x="14" y="1" width="1" height="7" fill="#000"/><rect x="13" y="1" width="1" height="7" fill="#808080"/>
<rect x="0" y="2" width="1" height="2" fill="#000"/><rect x="0" y="4" width="1" height="4" fill="#808080"/>
<rect x="1" y="2" width="12" height="6" fill="#fff"/>
<rect x="3" y="2" width="1" height="1" fill="#A0A0A0"/><rect x="5" y="2" width="1" height="1" fill="#A0A0A0"/><rect x="7" y="2" width="1" height="1" fill="#A0A0A0"/><rect x="9" y="2" width="1" height="1" fill="#A0A0A0"/><rect x="11" y="2" width="1" height="1" fill="#A0A0A0"/>
<rect x="2" y="3" width="11" height="2" fill="#C0C0C0"/>

<rect x="2" y="6" width="11" height="1" fill="#000"/>
<rect x="1" y="8" width="13" height="2" fill="#000"/>
</svg>
<div class="tt" style="left:45px;top:252px;">OpenBonusCalculatorUpdates</div>
<svg style="left:26px;top:271px" width="15" height="10" viewBox="0 0 15 10" shape-rendering="crispEdges">
<rect x="3" y="0" width="10" height="1" fill="#808080"/><rect x="2" y="0" width="1" height="1" fill="#000"/><rect x="13" y="0" width="1" height="1" fill="#000"/>
<rect x="1" y="1" width="1" height="1" fill="#000"/><rect x="2" y="1" width="11" height="1" fill="#A0A0A0"/><rect x="14" y="1" width="1" height="7" fill="#000"/><rect x="13" y="1" width="1" height="7" fill="#808080"/>
<rect x="0" y="2" width="1" height="2" fill="#000"/><rect x="0" y="4" width="1" height="4" fill="#808080"/>
<rect x="1" y="2" width="12" height="6" fill="#fff"/>
<rect x="3" y="2" width="1" height="1" fill="#A0A0A0"/><rect x="5" y="2" width="1" height="1" fill="#A0A0A0"/><rect x="7" y="2" width="1" height="1" fill="#A0A0A0"/><rect x="9" y="2" width="1" height="1" fill="#A0A0A0"/><rect x="11" y="2" width="1" height="1" fill="#A0A0A0"/>
<rect x="2" y="3" width="11" height="2" fill="#C0C0C0"/>
<rect x="7" y="2" width="5" height="4" fill="#FF0000"/><rect x="8" y="2" width="1" height="1" fill="#fff"/><rect x="10" y="2" width="1" height="1" fill="#fff"/>
<rect x="2" y="6" width="11" height="1" fill="#000"/>
<rect x="1" y="8" width="13" height="2" fill="#000"/>
</svg>
<div class="tt" style="left:45px;top:268px;">BonusCalculatorBuilds</div>
<div class="sunkp" style="left:311px;top:72px;width:412px;height:217px;background:#fff"></div>
<div style="left:313px;top:74px;width:408px;height:213px;border:1px solid #000"></div>
<div class="btn" style="left:314px;top:75px;width:90px;height:16px;"></div>
<div class="btn" style="left:404px;top:75px;width:68px;height:16px;"></div>
<div class="btn" style="left:472px;top:75px;width:150px;height:16px;"></div>
<div style="left:622px;top:75px;width:98px;height:16px;background:#D4D0C8;box-shadow:inset 0 1px #FFFFFF,inset 0 -1px #404040,inset 0 -2px #808080"></div>
<div class="t" style="left:319px;top:78px;">Build</div>
<div class="t" style="left:317px;top:93px;">bonuscalc_7</div>
<div class="t" style="left:710px;top:93px">0</div>
<div class="t" style="left:317px;top:107px;">bonuscalc_6</div>
<div class="t" style="left:710px;top:107px">1</div>
<div class="t" style="left:317px;top:121px;">bonuscalc_5</div>
<div class="t" style="left:710px;top:121px">1</div>
<div class="t" style="left:317px;top:135px;">bonuscalc_4</div>
<div class="t" style="left:710px;top:135px">1</div>
<div class="t" style="left:317px;top:149px;">bonuscalc_3</div>
<div class="t" style="left:710px;top:149px">1</div>
<div class="t" style="left:317px;top:163px;">bonuscalc_2</div>
<div class="t" style="left:710px;top:163px">0</div>
<div class="t" style="left:317px;top:177px;">bonuscalc_1</div>
<div class="t" style="left:409px;top:177px;">select</div>
<div class="t" style="left:477px;top:177px;">bonuscalc_1</div>
<div class="t" style="left:686px;top:177px">r.aa00</div>
<div class="t" style="left:317px;top:191px;">Bonrel2_0412145</div>
<div class="t" style="left:409px;top:191px;">orig</div>
<div class="t" style="left:477px;top:191px;">Bonrel2_041...</div>
<div class="t" style="left:317px;top:205px;">Bonrel2_0412144</div>
<div class="t" style="left:409px;top:205px;">orig</div>
<div class="t" style="left:477px;top:205px;">bonuscalc_7</div>
<div class="t" style="left:317px;top:219px;">Bonrel2_0412143</div>
<div class="t" style="left:409px;top:219px;">orig</div>
<div class="t" style="left:477px;top:219px;">bonuscalc_7</div>
<div class="t" style="left:686px;top:219px">r.ab00</div>
<div class="t" style="left:317px;top:233px;">Bonrel2_041214</div>
<div class="t" style="left:409px;top:233px;">orig</div>
<div class="t" style="left:477px;top:233px;">-</div>
<div class="t" style="left:686px;top:233px">r.ab01</div>
<div class="chk" style="left:330px;top:270px;width:390px;height:16px"></div>
<div class="sbtn" style="left:314px;top:270px;width:16px;height:16px"></div>
<svg style="left:319px;top:274px" width="4" height="7"><path d="M4 0v7l-4-3.5z" fill="#000"/></svg>
<div class="sbtn" style="left:330px;top:270px;width:196px;height:16px"></div>
<div class="sbtn" style="left:704px;top:270px;width:16px;height:16px"></div>
<svg style="left:710px;top:274px" width="4" height="7"><path d="M0 0v7l4-3.5z" fill="#000"/></svg>
<div class="sunkp" style="left:4px;top:292px;width:719px;height:4px"></div>
<div class="sunkp" style="left:4px;top:299px;width:719px;height:140px;background:#fff"></div>
<div class="chk" style="left:705px;top:317px;width:16px;height:88px"></div>
<div class="chk" style="left:22px;top:421px;width:667px;height:16px"></div>
<div style="left:705px;top:421px;width:16px;height:16px;background:#D4D0C8"></div>
<div class="sbtn" style="left:705px;top:301px;width:16px;height:16px"></div>
<div class="sbtn" style="left:705px;top:405px;width:16px;height:16px"></div>
<div class="sbtn" style="left:6px;top:421px;width:16px;height:16px"></div>
<div class="sbtn" style="left:689px;top:421px;width:16px;height:16px"></div>
<svg style="left:709px;top:306px" width="8" height="6"><path d="M1 5h7l-3.5-3.5z" fill="#fff"/><path d="M0 4h7l-3.5-3.5z" fill="#808080"/></svg>
<svg style="left:709px;top:411px" width="8" height="6"><path d="M1 1h7l-3.5 3.5z" fill="#fff"/><path d="M0 0h7l-3.5 3.5z" fill="#808080"/></svg>
<svg style="left:11px;top:425px" width="6" height="9"><path d="M5 1v7l-3.5-3.5z" fill="#fff"/><path d="M4 0v7l-3.5-3.5z" fill="#808080"/></svg>
<svg style="left:695px;top:425px" width="6" height="9"><path d="M1 1v7l3.5-3.5z" fill="#fff"/><path d="M0 0v7l3.5-3.5z" fill="#808080"/></svg>
<div class="btn" style="left:10px;top:442px;width:23px;height:22px;"></div>
<div class="btn" style="left:33px;top:442px;width:23px;height:22px;"></div>
<svg style="left:13px;top:445px;" width="16" height="15" viewBox="0 0 16 15" shape-rendering="crispEdges"><path d="M0 0h16v1h-16zM0 1h16v1h-16zM0 2h2v1h-2zM14 2h2v1h-2zM0 3h2v1h-2zM14 3h2v1h-2zM0 4h2v1h-2zM14 4h2v1h-2zM0 5h2v1h-2zM14 5h2v1h-2zM0 6h2v1h-2zM14 6h2v1h-2zM0 7h2v1h-2zM14 7h2v1h-2zM0 8h2v1h-2zM14 8h2v1h-2zM0 9h2v1h-2zM14 9h2v1h-2zM0 10h2v1h-2zM14 10h2v1h-2zM0 11h2v1h-2zM14 11h2v1h-2zM0 12h2v1h-2zM14 12h2v1h-2zM0 13h16v1h-16zM0 14h16v1h-16z" fill="#000080"/><path d="M2 2h12v1h-12zM2 3h1v1h-1zM13 3h1v1h-1zM2 4h12v1h-12zM2 5h1v1h-1zM11 5h3v1h-3zM2 6h12v1h-12zM2 7h1v1h-1zM13 7h1v1h-1zM2 8h12v1h-12zM2 9h1v1h-1zM13 9h1v1h-1zM2 10h12v1h-12zM2 11h1v1h-1zM11 11h3v1h-3zM2 12h12v1h-12z" fill="#FFFFFF"/><path d="M3 3h10v1h-10zM3 5h8v1h-8zM3 7h10v1h-10zM3 9h10v1h-10zM3 11h8v1h-8z" fill="#808080"/></svg>
<svg style="left:36px;top:445px;" width="16" height="16" viewBox="0 0 16 16" shape-rendering="crispEdges"><path d="M0 0h1v1h-1zM9 0h1v1h-1zM14 0h2v1h-2zM2 1h1v1h-1zM4 1h1v1h-1zM7 1h2v1h-2zM11 1h1v1h-1zM15 1h1v1h-1zM2 2h3v1h-3zM7 2h2v1h-2zM11 2h3v1h-3zM3 3h2v1h-2zM7 3h2v1h-2zM12 3h3v1h-3zM0 4h1v1h-1zM4 4h1v1h-1zM7 4h3v1h-3zM13 4h2v1h-2zM0 5h2v1h-2zM4 5h1v1h-1zM7 5h4v1h-4zM13 5h1v1h-1zM1 6h1v1h-1zM4 6h1v1h-1zM7 6h2v1h-2zM10 6h1v1h-1zM15 6h1v1h-1zM3 7h2v1h-2zM7 7h2v1h-2zM12 7h1v1h-1zM14 7h2v1h-2zM0 8h16v1h-16zM0 9h16v1h-16zM0 10h1v1h-1zM15 10h1v1h-1zM0 11h16v1h-16zM0 12h1v1h-1zM15 12h1v1h-1zM0 13h16v1h-16zM0 14h1v1h-1zM15 14h1v1h-1zM0 15h16v1h-16z" fill="#FFFFFF"/><path d="M1 0h8v1h-8zM10 0h4v1h-4zM0 1h2v1h-2zM3 1h1v1h-1zM5 1h2v1h-2zM9 1h2v1h-2zM12 1h3v1h-3zM0 2h2v1h-2zM5 2h2v1h-2zM9 2h2v1h-2zM14 2h2v1h-2zM0 3h3v1h-3zM5 3h2v1h-2zM9 3h3v1h-3zM15 3h1v1h-1zM1 4h3v1h-3zM5 4h2v1h-2zM10 4h3v1h-3zM15 4h1v1h-1zM2 5h2v1h-2zM5 5h2v1h-2zM11 5h2v1h-2zM14 5h2v1h-2zM0 6h1v1h-1zM2 6h2v1h-2zM5 6h2v1h-2zM9 6h1v1h-1zM11 6h4v1h-4zM0 7h3v1h-3zM5 7h2v1h-2zM9 7h3v1h-3zM13 7h1v1h-1z" fill="#000080"/><path d="M1 10h14v1h-14zM1 12h14v1h-14zM1 14h14v1h-14z" fill="#000000"/></svg>
<div class="sunk" style="left:61px;top:442px;width:660px;height:21px;background:#fff"></div>
<div class="sbtn" style="left:703px;top:444px;width:16px;height:17px"></div>
<svg style="left:707px;top:450px" width="7" height="4"><path d="M0 0h7l-3.5 4z" fill="#000"/></svg>
<div style="left:4px;top:467px;width:719px;height:1px;background:#808080"></div>
<div style="left:4px;top:468px;width:719px;height:1px;background:#FFFFFF"></div>
<div style="left:167px;top:471px;width:79px;height:16px;box-shadow:inset 1px 1px #808080,inset -1px -1px #FFFFFF"></div>
<div class="ms" style="left:169px;top:473px;transform:scaleX(0.93)">User: black</div>
<div style="left:248px;top:471px;width:170px;height:16px;box-shadow:inset 1px 1px #808080,inset -1px -1px #FFFFFF"></div>
<div class="ms" style="left:250px;top:473px;transform:scaleX(0.886)">Product: BonusCalculator</div>
<div style="left:420px;top:471px;width:84px;height:16px;box-shadow:inset 1px 1px #808080,inset -1px -1px #FFFFFF"></div>
<div class="ms" style="left:422px;top:473px;transform:scaleX(0.89)">Stream: rel2</div>
<div style="left:506px;top:471px;width:64px;height:16px;box-shadow:inset 1px 1px #808080,inset -1px -1px #FFFFFF"></div>
<div class="ms" style="left:508px;top:473px;transform:scaleX(0.915)">Update: -</div>
<div style="left:572px;top:471px;width:46px;height:16px;box-shadow:inset 1px 1px #808080,inset -1px -1px #FFFFFF"></div>
<div class="ms" style="left:574px;top:473px;transform:scaleX(0.93)">LCD: \</div>
<div style="left:620px;top:471px;width:85px;height:16px;box-shadow:inset 1px 1px #808080,inset -1px -1px #FFFFFF"></div>
<div class="ms" style="left:622px;top:473px;transform:scaleX(0.96)">Dir: D:\black</div>
<svg style="left:711px;top:474px;" width="12" height="12" viewBox="0 0 12 12" shape-rendering="crispEdges"><path d="M11 0h1v1h-1zM10 1h1v1h-1zM9 2h1v1h-1zM8 3h1v1h-1zM7 4h1v1h-1zM11 4h1v1h-1zM6 5h1v1h-1zM10 5h1v1h-1zM5 6h1v1h-1zM9 6h1v1h-1zM4 7h1v1h-1zM8 7h1v1h-1zM3 8h1v1h-1zM7 8h1v1h-1zM11 8h1v1h-1zM2 9h1v1h-1zM6 9h1v1h-1zM10 9h1v1h-1zM1 10h1v1h-1zM5 10h1v1h-1zM9 10h1v1h-1zM0 11h1v1h-1zM4 11h1v1h-1zM8 11h1v1h-1z" fill="#FFFFFF"/><path d="M11 1h1v1h-1zM10 2h2v1h-2zM9 3h2v1h-2zM8 4h2v1h-2zM7 5h2v1h-2zM11 5h1v1h-1zM6 6h2v1h-2zM10 6h2v1h-2zM5 7h2v1h-2zM9 7h2v1h-2zM4 8h2v1h-2zM8 8h2v1h-2zM3 9h2v1h-2zM7 9h2v1h-2zM11 9h1v1h-1zM2 10h2v1h-2zM6 10h2v1h-2zM10 10h2v1h-2zM1 11h2v1h-2zM5 11h2v1h-2zM9 11h2v1h-2z" fill="#808080"/></svg>
<div class="menu" style="left:550px;top:41px;width:163px;height:134px"></div>
<div class="t" style="left:569px;top:46px;color:#000">Define Stream</div>
<div class="t" style="left:569px;top:63px;color:#000">Rename Stream</div>
<div class="hl" style="left:553px;top:78px;width:157px;height:17px"></div>
<div class="t" style="left:569px;top:80px;color:#fff">Process Flows</div>
<svg style="left:700px;top:83px" width="4" height="7"><path d="M0 0v7l4-3.5z" fill="#fff"/></svg>
<div class="t" style="left:569px;top:97px;color:#000">Command Rules/Triggers</div>
<svg style="left:700px;top:100px" width="4" height="7"><path d="M0 0v7l4-3.5z" fill="#000"/></svg>
<div class="t" style="left:569px;top:114px;color:#000">Permissions</div>
<svg style="left:700px;top:117px" width="4" height="7"><path d="M0 0v7l4-3.5z" fill="#000"/></svg>
<div style="left:554px;top:132px;width:156px;height:1px;background:#808080"></div>
<div style="left:554px;top:133px;width:156px;height:1px;background:#fff"></div>
<div class="t" style="left:569px;top:140px;color:#000">Create Menu</div>
<svg style="left:700px;top:143px" width="4" height="7"><path d="M0 0v7l4-3.5z" fill="#000"/></svg>
<div class="t" style="left:569px;top:157px;color:#000">Delete</div>
<svg style="left:700px;top:160px" width="4" height="7"><path d="M0 0v7l4-3.5z" fill="#000"/></svg>
<div class="menu" style="left:403px;top:75px;width:150px;height:108px"></div>
<div class="t" style="left:422px;top:80px;color:#000">Activity Process</div>
<svg style="left:540px;top:83px" width="4" height="7"><path d="M0 0v7l4-3.5z" fill="#000"/></svg>
<div class="t" style="left:422px;top:97px;color:#000">Problem Process</div>
<svg style="left:540px;top:100px" width="4" height="7"><path d="M0 0v7l4-3.5z" fill="#000"/></svg>
<div class="t" style="left:422px;top:114px;color:#000">Update Process</div>
<svg style="left:540px;top:117px" width="4" height="7"><path d="M0 0v7l4-3.5z" fill="#000"/></svg>
<div class="t" style="left:422px;top:131px;color:#000">Build Process</div>
<svg style="left:540px;top:134px" width="4" height="7"><path d="M0 0v7l4-3.5z" fill="#000"/></svg>
<div class="t" style="left:422px;top:148px;color:#000">Requirements Process</div>
<svg style="left:540px;top:151px" width="4" height="7"><path d="M0 0v7l4-3.5z" fill="#000"/></svg>
<div class="hl" style="left:406px;top:163px;width:144px;height:17px"></div>
<div class="t" style="left:422px;top:165px;color:#fff">Document Process</div>
<svg style="left:540px;top:168px" width="4" height="7"><path d="M0 0v7l4-3.5z" fill="#fff"/></svg>
<div class="menu" style="left:547px;top:160px;width:138px;height:126px"></div>
<div class="t" style="left:566px;top:165px;color:#000">View Process Flow</div>
<div style="left:551px;top:183px;width:131px;height:1px;background:#808080"></div>
<div style="left:551px;top:184px;width:131px;height:1px;background:#fff"></div>
<div class="hl" style="left:550px;top:189px;width:132px;height:17px"></div>
<div class="t" style="left:566px;top:191px;color:#fff">Add Transition...</div>
<div class="t" style="left:566px;top:208px;color:#000">List Transitions</div>
<div class="t" style="left:566px;top:225px;color:#000">Enable Transition...</div>
<div class="t" style="left:566px;top:242px;color:#000">Set Permission...</div>
<div style="left:551px;top:260px;width:131px;height:1px;background:#808080"></div>
<div style="left:551px;top:261px;width:131px;height:1px;background:#fff"></div>
<div class="t" style="left:566px;top:268px;color:#000">Enforce Process</div>
</body></html>
